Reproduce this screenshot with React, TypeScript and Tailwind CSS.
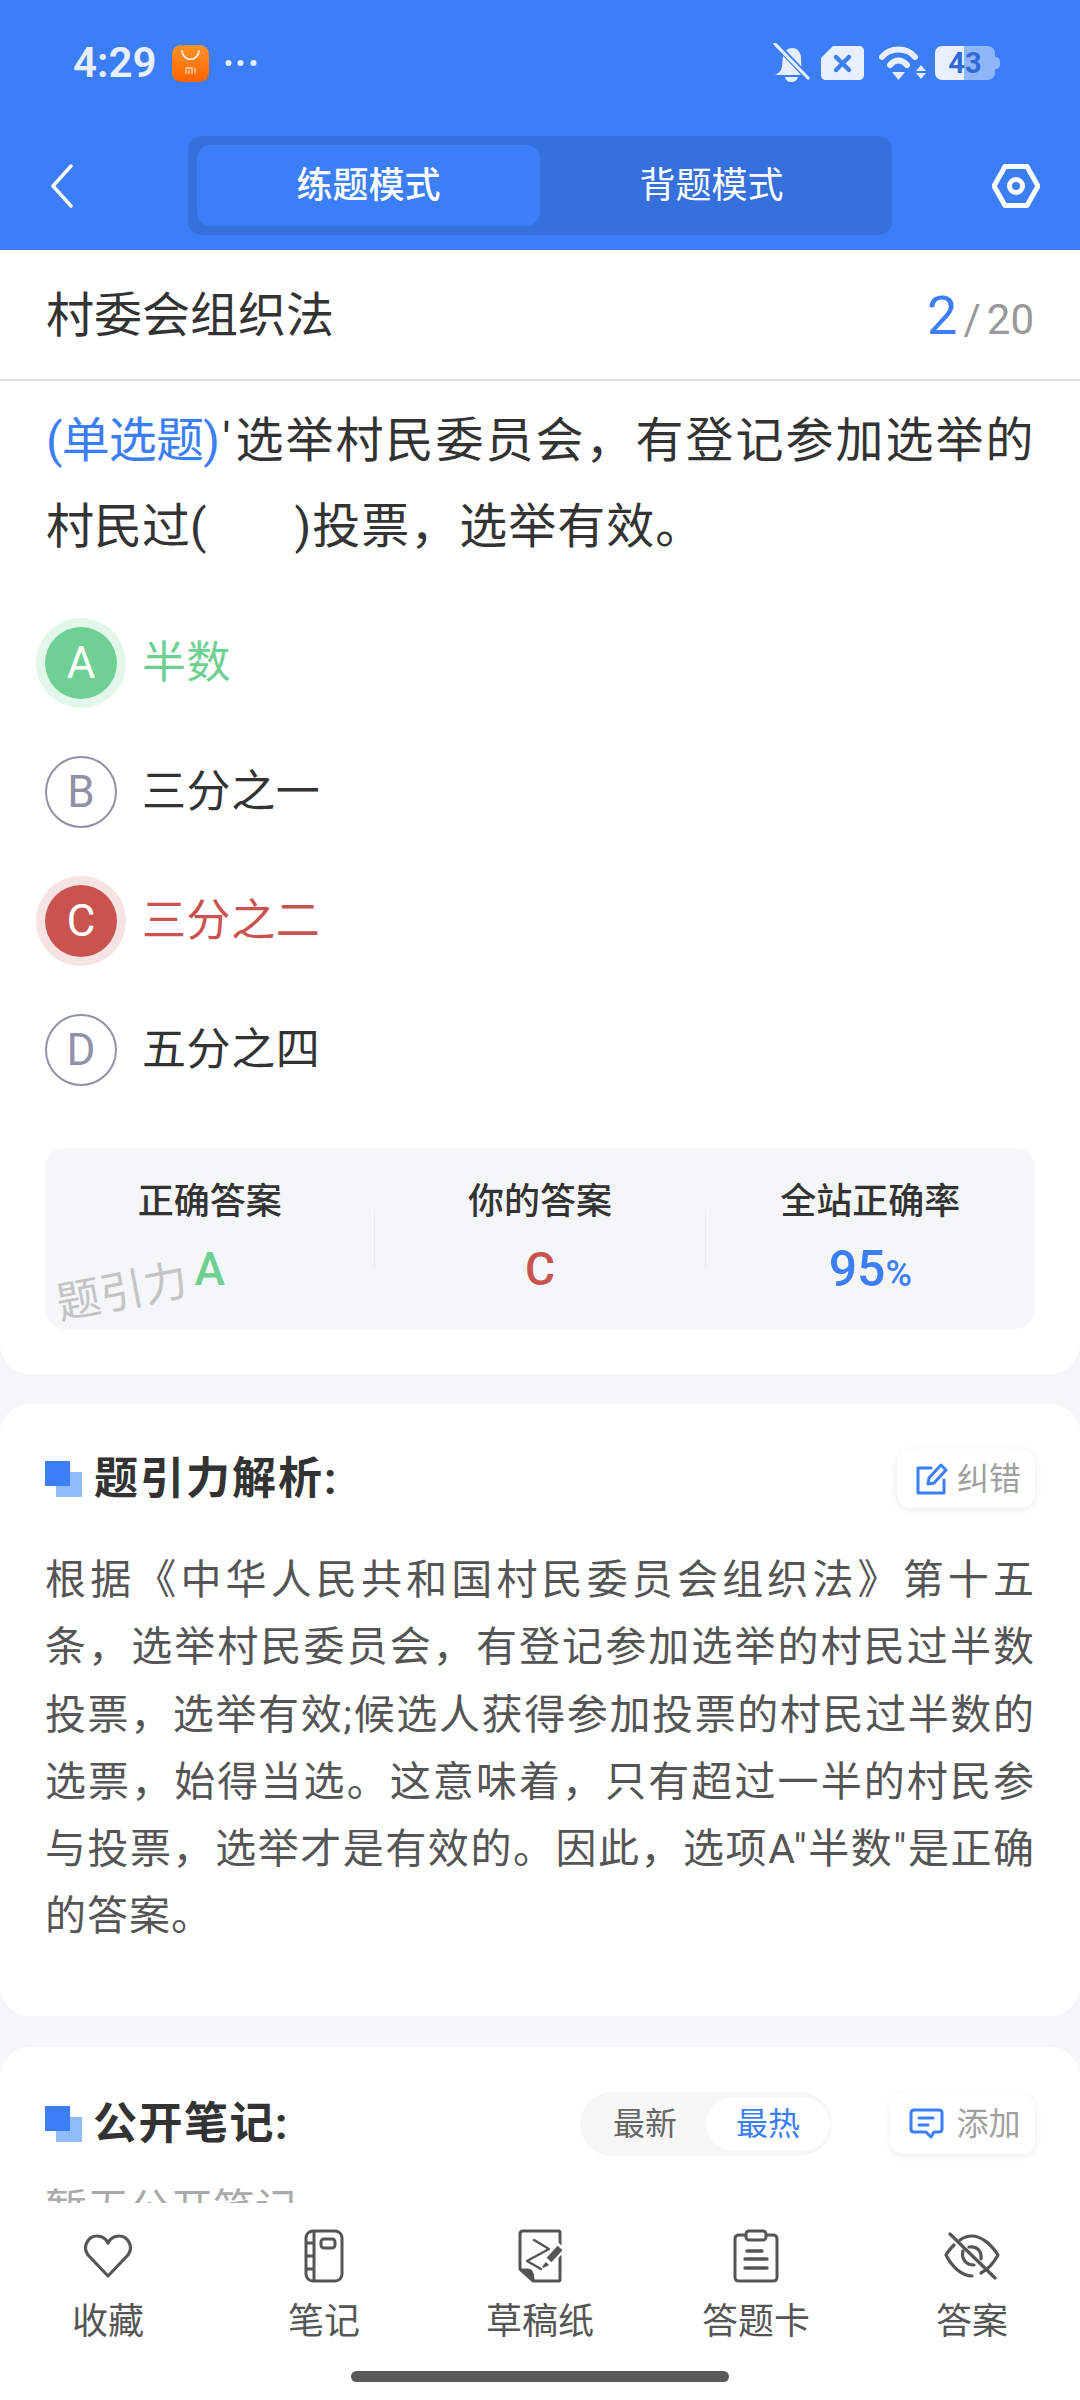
const options = [
  { key: "A", text: "半数", state: "right" },
  { key: "B", text: "三分之一", state: "none" },
  { key: "C", text: "三分之二", state: "wrong" },
  { key: "D", text: "五分之四", state: "none" },
];

const analysis = [
  "根据《中华人民共和国村民委员会组织法》第十五",
  "条，选举村民委员会，有登记参加选举的村民过半数",
  "投票，选举有效;候选人获得参加投票的村民过半数的",
  "选票，始得当选。这意味着，只有超过一半的村民参",
  "与投票，选举才是有效的。因此，选项A\"半数\"是正确",
];

function SectionMark() {
  return (
    <svg width="37" height="36" viewBox="0 0 37 36" className="shrink-0">
      <rect x="11" y="11" width="26" height="25" fill="#8fbbfb" />
      <rect x="0" y="0" width="25" height="25" fill="#3b7ef8" />
    </svg>
  );
}

function HeartIcon() {
  return (
    <svg width="50" height="46" viewBox="0 0 50 46" fill="none" stroke="#555" strokeWidth="3.2" strokeLinejoin="round">
      <path d="M25 43 L5 22 C-1 14 5 3 14 3 C19 3 23 6 25 10 C27 6 31 3 36 3 C45 3 51 14 45 22 Z" />
    </svg>
  );
}

function NotebookIcon() {
  return (
    <svg width="40" height="54" viewBox="0 0 40 54" fill="none" stroke="#555" strokeWidth="3">
      <rect x="2" y="2" width="36" height="50" rx="7" />
      <path d="M10 2 V52 M2 14 H10 M2 27 H10 M2 40 H10" />
      <rect x="17" y="10" width="14" height="9" rx="3" />
    </svg>
  );
}

function DraftIcon() {
  return (
    <svg width="44" height="54" viewBox="0 0 44 54" fill="none" stroke="#555" strokeWidth="3" strokeLinejoin="round" strokeLinecap="round">
      <path d="M5 2 H41 C42 2 42 3 42 4 V50 C42 51 42 52 41 52 H15 L2 40 V5 C2 3 3 2 5 2 Z" />
      <path d="M3 41 H10 C13 41 15 44 15 51 Z" fill="#555" />
      <path d="M16 11 L31 20 L9 32 L23 40" strokeWidth="2.4" />
      <path d="M26 36 L44 17" stroke="#fff" strokeWidth="11" strokeLinecap="butt" />
      <path d="M31 31 L42 19" strokeWidth="6.5" strokeLinecap="butt" />
      <path d="M28 34 L25 38 L30 36 Z" fill="#555" strokeWidth="1.5" />
    </svg>
  );
}

function ClipboardIcon() {
  return (
    <svg width="46" height="54" viewBox="0 0 46 54" fill="none" stroke="#555" strokeWidth="3" strokeLinecap="round">
      <path d="M11 6 H6 C3 6 2 8 2 10 V48 C2 51 3 52 6 52 H40 C43 52 44 51 44 48 V10 C44 8 43 6 40 6 H35" />
      <rect x="13" y="2" width="20" height="9" rx="3" />
      <path d="M14 22 H29 M12 30 H34 M12 39 H34" strokeWidth="3.4" />
    </svg>
  );
}

function EyeOffIcon() {
  return (
    <svg width="58" height="48" viewBox="0 0 58 48" fill="none" stroke="#555" strokeWidth="3.2" strokeLinecap="round" strokeLinejoin="round">
      <path d="M17 8 C21 5 25 4 29 4 C38 4 48 12 55 23 C50 32 44 38 38 41 M29 44 C19 44 9 35 3 23 C5 19 8 16 11 13" />
      <path d="M7 2 L52 46" />
      <path d="M20 19 C18 27 23 33 31 33 M26 15 C34 14 39 19 38 27" />
    </svg>
  );
}

function StatusBar() {
  return (
    <div className="flex h-[126px] items-center justify-between pl-[73px] pr-[80px]">
      <div className="flex items-center">
        <span className="text-[42px] font-semibold leading-none text-[#e8f0ff]">4:29</span>
        <svg width="37" height="37" viewBox="0 0 37 37" className="ml-[16px]">
          <defs>
            <linearGradient id="store" x1="0" y1="0" x2="0" y2="1">
              <stop offset="0" stopColor="#ff9326" />
              <stop offset="1" stopColor="#ff6300" />
            </linearGradient>
          </defs>
          <rect width="37" height="37" rx="9" fill="url(#store)" />
          <path d="M10 6 C11 17 26 17 27 6" fill="none" stroke="#fff" strokeWidth="1.6" strokeLinecap="round" />
          <path d="M14 23 H20 V29 M14 23 V29 M17 25 V29 M23 23 V29" fill="none" stroke="#ffd9b3" strokeWidth="1.3" />
        </svg>
        <svg width="32" height="8" viewBox="0 0 32 8" className="ml-[16px]">
          <circle cx="3.5" cy="4" r="3" fill="#e8f0ff" />
          <circle cx="15.5" cy="4" r="3" fill="#e8f0ff" />
          <circle cx="28.5" cy="4" r="3" fill="#e8f0ff" />
        </svg>
      </div>
      <div className="flex items-center">
        <svg width="37" height="40" viewBox="0 0 37 40">
          <path d="M8 27 C10 23 9 18 10 14 C11 8 15 5 19 5 C25 5 28 10 28 15 C28 20 29 24 27 28 L33 32 H2 C4 31 6 30 8 27 Z" fill="#e8f0ff" />
          <path d="M12 34 H25 C24 38 21 39 18 39 C15 39 13 38 12 34 Z" fill="#e8f0ff" />
          <path d="M2 0 L35 35" stroke="#3b7ef8" strokeWidth="6" />
          <path d="M2 1 L35 35" stroke="#e8f0ff" strokeWidth="3.2" strokeLinecap="round" />
        </svg>
        <svg width="43" height="34" viewBox="0 0 43 34" className="ml-[11px]">
          <path d="M12 0 H38 C41 0 43 2 43 5 V29 C43 32 41 34 38 34 H5 C2 34 0 32 0 29 V12 Z" fill="#e8f0ff" />
          <path d="M15 11 L28 24 M28 11 L15 24" stroke="#3b7ef8" strokeWidth="4.4" strokeLinecap="round" />
        </svg>
        <svg width="47" height="34" viewBox="0 0 47 34" className="ml-[15px]">
          <path d="M3 11 C11 1 28 1 36 11" fill="none" stroke="#e8f0ff" strokeWidth="6" strokeLinecap="round" />
          <path d="M11 19 C16 13 23 13 28 19" fill="none" stroke="#e8f0ff" strokeWidth="6" strokeLinecap="round" />
          <path d="M13 26 H26 L19.5 34 Z" fill="#e8f0ff" />
          <path d="M42 19 L47 25 H37 Z M37 27 H47 L42 33 Z" fill="#e8f0ff" />
        </svg>
        <svg width="65" height="34" viewBox="0 0 65 34" className="ml-[9px]">
          <path d="M8 0 H52 C57 0 60 3 60 8 V26 C60 31 57 34 52 34 H8 C3 34 0 31 0 26 V8 C0 3 3 0 8 0 Z" fill="#8fb6fb" />
          <path d="M60 11 C64 11 65 13 65 17 C65 21 64 23 60 23 Z" fill="#8fb6fb" />
          <path d="M8 0 H29 V34 H8 C3 34 0 31 0 26 V8 C0 3 3 0 8 0 Z" fill="#e8f0ff" />
          <text x="30" y="27" textAnchor="middle" fontSize="29" fontWeight="700" fill="#2f6ad6" fontFamily="Roboto, sans-serif">43</text>
        </svg>
      </div>
    </div>
  );
}

export default function App() {
  return (
    <div className="relative h-[2400px] w-[1080px] overflow-hidden bg-[#f5f6f8] font-['Roboto','Noto_Sans_CJK_SC',sans-serif] text-[#333]">
      <header className="h-[250px] bg-[#3b7ef8]">
        <StatusBar />
        <div className="flex items-center justify-between px-[40px] pt-[10px]">
          <svg width="48" height="44" viewBox="0 0 48 44" fill="none" stroke="#fff" strokeWidth="3.4" strokeLinecap="round" strokeLinejoin="round">
            <path d="M31 2 L13 22 L31 42" />
          </svg>
          <div className="flex h-[99px] w-[704px] items-center rounded-[14px] bg-[#3670dc] pl-[9px]">
            <div className="flex h-[81px] w-[343px] items-center justify-center rounded-[14px] bg-[#3b7ef8] text-[36px] font-medium text-white">
              练题模式
            </div>
            <div className="flex h-[81px] w-[343px] items-center justify-center text-[36px] text-white">
              背题模式
            </div>
          </div>
          <svg width="48" height="44" viewBox="0 0 48 44" fill="none" stroke="#fff" strokeWidth="5" strokeLinejoin="round">
            <path d="M13 2.5 H35 L46 22 L35 41.5 H13 L2 22 Z" />
            <circle cx="24" cy="22" r="6.5" />
          </svg>
        </div>
      </header>

      <div className="flex h-[131px] items-center justify-between border-b-2 border-[#e4e4e4] bg-white px-[46px] pt-[2px]">
        <span className="text-[48px] leading-none">村委会组织法</span>
        <span className="flex items-baseline text-[#999]">
          <span className="text-[54px] leading-none text-[#3b7ef8]">2</span>
          <span className="ml-[6px] text-[42px] leading-none">/</span>
          <span className="ml-[6px] text-[42px] leading-none">20</span>
        </span>
      </div>

      <section className="rounded-b-[30px] bg-white px-[45px] pb-[45px] pt-[17px]">
        <p className="whitespace-nowrap pl-[1px] text-[48px] leading-[86px] tracking-[2px]">
          <span className="tracking-[-0.8px] text-[#3b7ef8]">(单选题)</span>
          <span className="mx-[3px]">'</span>选举村民委员会，有登记参加选举的
          <br />
          <span className="tracking-[0px]">村民过(</span>
          <span className="inline-block w-[88px]" />
          <span className="tracking-[1px]">)投票，选举有效。</span>
        </p>

        <div className="mt-[28px]">
          {options.map((o) => (
            <div key={o.key} className="flex h-[129px] items-center gap-[25px]">
              {o.state === "right" && (
                <span className="flex h-[72px] w-[72px] items-center justify-center rounded-full bg-[#6ed093] text-[44px] text-white ring-[9px] ring-[#e3f6ea]">
                  {o.key}
                </span>
              )}
              {o.state === "wrong" && (
                <span className="flex h-[72px] w-[72px] items-center justify-center rounded-full bg-[#c9544f] text-[44px] text-white ring-[9px] ring-[#f6e3e3]">
                  {o.key}
                </span>
              )}
              {o.state === "none" && (
                <span className="flex h-[72px] w-[72px] items-center justify-center rounded-full border-2 border-[#9092a8] text-[44px] text-[#9092a8]">
                  {o.key}
                </span>
              )}
              <span
                className={
                  o.state === "right"
                    ? "text-[44px] tracking-[0.6px] text-[#6ed093]"
                    : o.state === "wrong"
                      ? "text-[44px] tracking-[0.6px] text-[#c9544f]"
                      : "text-[44px] tracking-[0.6px] text-[#333]"
                }
              >
                {o.text}
              </span>
            </div>
          ))}
        </div>

        <div className="relative mt-[34px] flex h-[181px] items-center rounded-[20px] bg-[#f5f6f8]">
          <div className="flex h-full flex-1 flex-col items-center pt-[34px]">
            <span className="text-[36px] font-medium leading-[40px]">正确答案</span>
            <span className="mt-[22px] text-[46px] font-medium leading-[50px] text-[#6ed093]">A</span>
          </div>
          <div className="h-[59px] w-px bg-[#eaecef]" />
          <div className="flex h-full flex-1 flex-col items-center pt-[34px]">
            <span className="text-[36px] font-medium leading-[40px]">你的答案</span>
            <span className="mt-[22px] text-[46px] font-medium leading-[50px] text-[#c9544f]">C</span>
          </div>
          <div className="h-[59px] w-px bg-[#eaecef]" />
          <div className="flex h-full flex-1 flex-col items-center pt-[34px]">
            <span className="text-[36px] font-medium leading-[40px]">全站正确率</span>
            <span className="mt-[22px] text-[50px] font-medium leading-[50px] text-[#3b7ef8]">
              95<span className="text-[36px]">%</span>
            </span>
          </div>
          <span className="absolute left-[11px] top-[119px] -rotate-[11deg] text-[44px] leading-[50px] text-[#c4c4c4]">
            题引力
          </span>
        </div>
      </section>

      <section className="mt-[30px] rounded-[30px] bg-white px-[45px] pb-[65px] pt-[45px]">
        <div className="flex h-[59px] items-center justify-between">
          <div className="flex items-center gap-[12px]">
            <SectionMark />
            <h2 className="text-[44px] font-bold leading-none tracking-[2px]">题引力解析:</h2>
          </div>
          <div className="flex h-[59px] w-[138px] items-center justify-center gap-[9px] rounded-[14px] bg-white pl-[5px] shadow-[0_2px_10px_rgba(0,0,0,0.08)]">
            <svg width="32" height="32" viewBox="0 0 32 32" fill="none" stroke="#3b7ef8" strokeWidth="3" strokeLinecap="round" strokeLinejoin="round">
              <path d="M15 5 H2 V30 H28 V17" />
              <path d="M12 21 L13 15 L25 2 L30 7 L18 20 Z" />
            </svg>
            <span className="text-[32px] text-[#a0a0a0]">纠错</span>
          </div>
        </div>
        <div className="mt-[39px] text-[41px] leading-[67.3px] tracking-[1px] text-[#555]">
          {analysis.map((line) => (
            <p key={line} className="text-justify [text-align-last:justify]">
              {line}
            </p>
          ))}
          <p>的答案。</p>
        </div>
      </section>

      <section className="mt-[31px] rounded-t-[30px] bg-white px-[45px] pt-[45px]">
        <div className="flex h-[64px] items-center">
          <div className="flex flex-1 items-center gap-[11px]">
            <SectionMark />
            <h2 className="text-[44px] font-bold leading-none tracking-[1.5px]">公开笔记:</h2>
          </div>
          <div className="flex h-[64px] w-[252px] items-center rounded-full bg-[#f6f6f6] pl-[33px]">
            <span className="text-[32px] text-[#666]">最新</span>
            <span className="ml-[29px] flex h-[54px] w-[124px] items-center justify-center rounded-full bg-white text-[32px] text-[#3b7ef8]">
              最热
            </span>
          </div>
          <div className="ml-[58px] flex h-[60px] w-[145px] items-center justify-center gap-[12px] rounded-[14px] bg-white pl-[5px] shadow-[0_2px_10px_rgba(0,0,0,0.08)]">
            <svg width="35" height="31" viewBox="0 0 35 31" fill="none" stroke="#3b7ef8" strokeWidth="3" strokeLinecap="round" strokeLinejoin="round">
              <path d="M5 2 H30 C32 2 33 3 33 5 V21 C33 23 32 24 30 24 H25 L22 29 L17 24 H5 C3 24 2 23 2 21 V5 C2 3 3 2 5 2 Z" />
              <path d="M10 10 H24 M10 17 H19" />
            </svg>
            <span className="text-[32px] text-[#a0a0a0]">添加</span>
          </div>
        </div>
        <p className="mt-[26px] text-[42px] leading-[56px] text-[#aaa]">暂无公开笔记</p>
      </section>

      <nav className="absolute bottom-0 left-0 flex h-[197px] w-full flex-col items-center bg-white pt-[27px]">
        <div className="grid w-full grid-cols-5">
          <div className="flex flex-col items-center">
            <span className="flex h-[52px] items-center"><HeartIcon /></span>
            <span className="mt-[18px] text-[36px] leading-[44px] text-[#555]">收藏</span>
          </div>
          <div className="flex flex-col items-center">
            <span className="flex h-[52px] items-center"><NotebookIcon /></span>
            <span className="mt-[18px] text-[36px] leading-[44px] text-[#555]">笔记</span>
          </div>
          <div className="flex flex-col items-center">
            <span className="flex h-[52px] items-center"><DraftIcon /></span>
            <span className="mt-[18px] text-[36px] leading-[44px] text-[#555]">草稿纸</span>
          </div>
          <div className="flex flex-col items-center">
            <span className="flex h-[52px] items-center"><ClipboardIcon /></span>
            <span className="mt-[18px] text-[36px] leading-[44px] text-[#555]">答题卡</span>
          </div>
          <div className="flex flex-col items-center">
            <span className="flex h-[52px] items-center"><EyeOffIcon /></span>
            <span className="mt-[18px] text-[36px] leading-[44px] text-[#555]">答案</span>
          </div>
        </div>
        <div className="mt-[27px] h-[11px] w-[378px] rounded-full bg-[#5a5a5a]" />
      </nav>
    </div>
  );
}
